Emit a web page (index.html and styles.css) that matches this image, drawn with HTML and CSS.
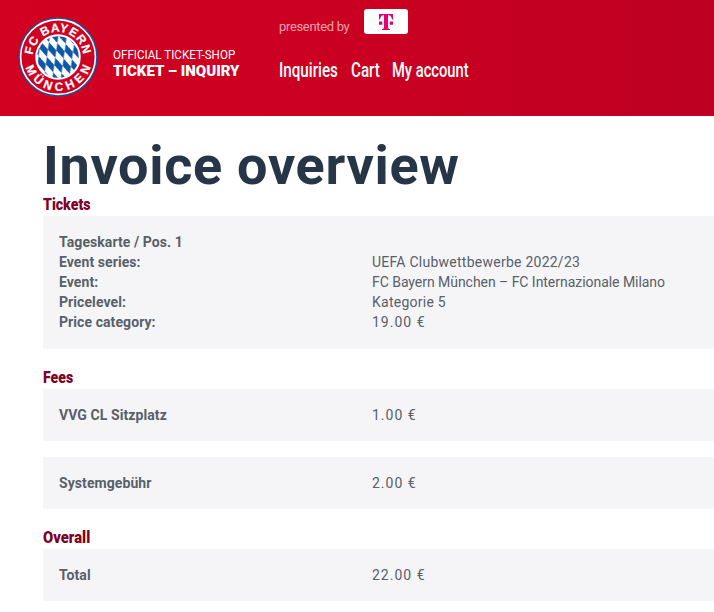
FILE: index.html
```
<!DOCTYPE html>
<html lang="en">
<head>
<meta charset="utf-8">
<title>Invoice overview</title>
<link rel="stylesheet" href="styles.css">
</head>
<body>
<header class="header">
  <svg class="crest" viewBox="-40 -40 80 80">
    <defs>
      <path id="top-arc" d="M-25.2 0A25.2 25.2 0 0 1 25.2 0"/>
      <path id="bottom-arc" d="M-34 0A34 34 0 0 0 34 0"/>
      <pattern id="lozenges" width="8" height="15.5" patternUnits="userSpaceOnUse" patternTransform="skewX(22) skewY(6) translate(1 1)">
        <rect width="8" height="15.5" fill="#fff"/>
        <path d="M4 0L8 7.75L4 15.5L0 7.75Z" fill="#0b58a8"/>
      </pattern>
    </defs>
    <circle r="39.6" fill="#0b58a8"/>
    <circle r="37.4" fill="#d00021" stroke="#fff" stroke-width="1.6"/>
    <circle r="21.7" fill="url(#lozenges)" stroke="#fff" stroke-width="2"/>
    <text class="crest-text"><textPath href="#top-arc" startOffset="2" textLength="74">FC BAYERN</textPath></text>
    <text class="crest-text"><textPath href="#bottom-arc" startOffset="10.5" textLength="86">MÜNCHEN</textPath></text>
  </svg>
  <div class="brand">
    <div class="brand-small">OFFICIAL TICKET-SHOP</div>
    <div class="brand-large">TICKET – INQUIRY</div>
  </div>
  <div class="header-main">
    <div class="sponsor">
      <span class="presented">presented by</span>
      <span class="sponsor-badge">
        <svg class="sponsor-mark" viewBox="0 0 14 16"><path fill="#e20074" d="M0 0H14V5.5H13C12.7 2.7 11.5 1.2 9 1V12.5C9 14.4 9.6 15 11 15V16H3V15C4.4 15 5 14.4 5 12.5V1C2.5 1.2 1.3 2.7 1 5.5H0ZM0 7.5H3.3V10.7H0ZM10.7 7.5H14V10.7H10.7Z"/></svg>
      </span>
    </div>
    <nav class="nav"><a class="nav-inquiries">Inquiries</a><a class="nav-cart">Cart</a><a class="nav-account">My account</a></nav>
  </div>
</header>
<main class="main">
  <h1>Invoice overview</h1>
  <h2><span>Tickets</span></h2>
  <section class="panel panel-tickets">
    <div class="row"><b>Tageskarte / Pos. 1</b></div>
    <div class="row"><b>Event series:</b><span>UEFA Clubwettbewerbe 2022/23</span></div>
    <div class="row"><b>Event:</b><span class="event-name">FC Bayern München – FC Internazionale Milano</span></div>
    <div class="row"><b>Pricelevel:</b><span>Kategorie 5</span></div>
    <div class="row"><b>Price category:</b><span class="amount">19.00 €</span></div>
  </section>
  <h2><span>Fees</span></h2>
  <section class="panel"><div class="row"><b>VVG CL Sitzplatz</b><span class="amount">1.00 €</span></div></section>
  <section class="panel"><div class="row"><b>Systemgebühr</b><span class="amount">2.00 €</span></div></section>
  <h2 class="overall"><span>Overall</span></h2>
  <section class="panel"><div class="row"><b>Total</b><span class="amount">22.00 €</span></div></section>
</main>
</body>
</html>
```
FILE: styles.css
```
* { box-sizing: border-box; }
body {
  margin: 0;
  height: 612px;
  overflow: hidden;
  background: #fff;
  color: #586069;
  font-family: Roboto, "Liberation Sans", sans-serif;
  font-size: 14px;
  line-height: 20px;
}
.header {
  display: flex;
  height: 116px;
  padding: 9px 0 0 18px;
  background: linear-gradient(90deg, #d20021, #c80022 60%, #bd0022);
  color: #fff;
  white-space: nowrap;
}
.crest { width: 80px; height: 80px; margin-top: 8px; flex: none; }
.crest-text { font: bold 12px "Liberation Sans", sans-serif; fill: #fff; stroke: #fff; stroke-width: .2px; }
.brand { width: 181px; padding: 37px 0 0 15px; flex: none; }
.brand-small { font-size: 13px; line-height: 17px; transform: scaleX(.893); transform-origin: left; }
.brand-large { font-size: 15px; font-weight: 900; line-height: 17px; }
.sponsor { display: flex; height: 25px; }
.presented { width: 85px; padding-top: 8px; font-size: 13px; letter-spacing: -.33px; color: #eba0ad; }
.sponsor-badge { display: flex; justify-content: center; align-items: center; width: 44px; height: 25px; background: #fff; border-radius: 3px; }
.sponsor-mark { width: 14px; height: 16px; }
.nav { display: flex; margin-top: 24px; font-size: 20px; line-height: 24px; }
.nav a { transform: scaleX(.76); transform-origin: left; font-weight: 500; }
.nav-inquiries { width: 72px; }
.nav-cart { width: 41px; }
.nav .nav-account { transform: scaleX(.735); }
.main { padding: 24px 0 0 43px; }
h1 { margin: 0; color: #263548; font-size: 54px; font-weight: 700; line-height: 51px; letter-spacing: .7px; white-space: nowrap; }
h2 { margin: 2px 0 0; height: 23px; color: #820026; font-size: 17px; font-weight: 900; line-height: 22px; }
h2 span { display: inline-block; transform: scaleX(.83); transform-origin: left; }
.overall span { transform: scaleX(.87); }
.panel { margin-bottom: 16px; padding: 16px; background: #f5f5f8; }
.panel-tickets { padding-bottom: 17px; }
.panel + h2 { margin-top: 0; height: 24px; padding-top: 1px; }
.row { display: grid; grid-template-columns: 313px auto; white-space: nowrap; }
.row b { letter-spacing: .08px; }
.row span { letter-spacing: .25px; }
.row .event-name { letter-spacing: -.04px; }
.row .amount { letter-spacing: 1px; }
```
